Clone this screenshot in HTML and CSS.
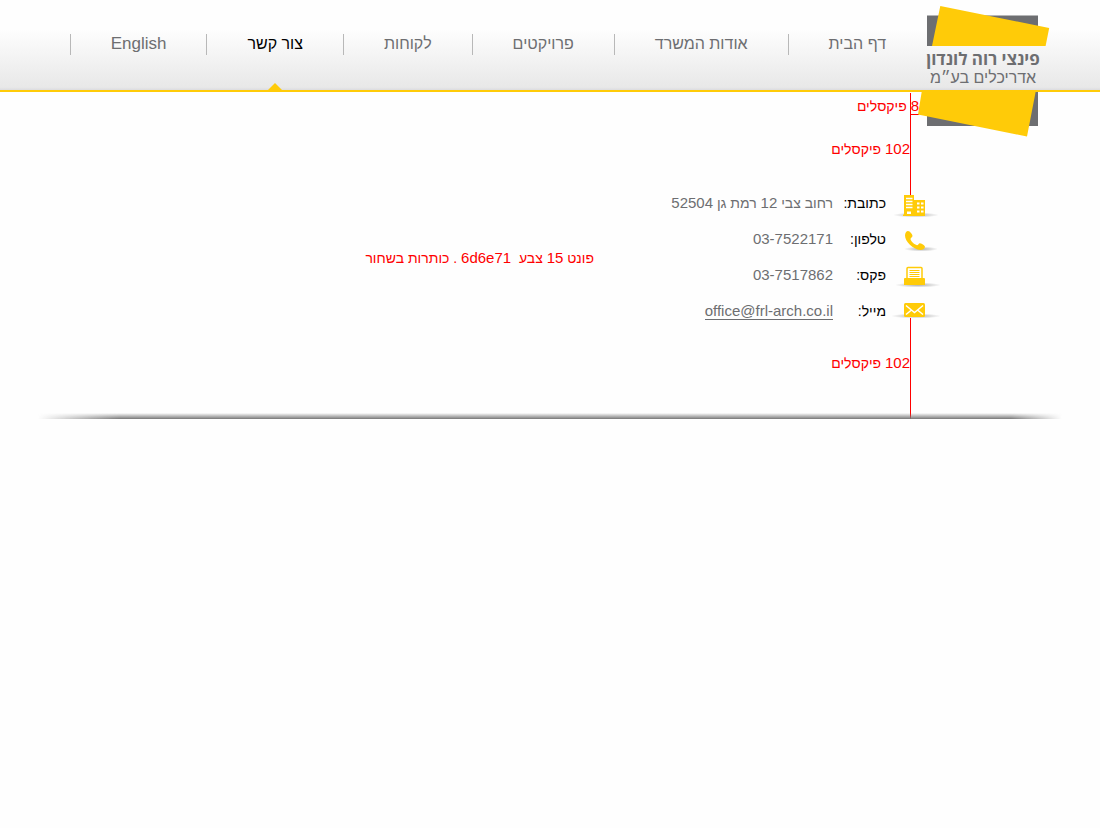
FILE: index.html
```
<!DOCTYPE html>
<html lang="he" dir="rtl">
<head>
<meta charset="utf-8">
<title>צור קשר</title>
<link rel="stylesheet" href="styles.css">
</head>
<body>
<header class="header">
  <a class="logo" href="#" aria-label="פינצי רוה לונדון אדריכלים">
    <svg width="133" height="133" viewBox="0 0 133 133">
      <path class="logo-dark" d="M10 10.500H121V41H10zM10 87H121V121H10z"/>
      <path class="logo-bright" d="M23.300 1L132.200 23L128.600 41H15zM5 85H119L110 131.500L1 109.500z"/>
      <text class="logo-name" x="66" y="60" text-anchor="middle">פינצי רוה לונדון</text>
      <text class="logo-sub" x="66" y="78" text-anchor="middle">אדריכלים בע״מ</text>
    </svg>
  </a>
  <nav>
    <ul class="menu">
      <li class="menu-item"><a href="#">דף הבית</a></li>
      <li class="menu-item"><a href="#">אודות המשרד</a></li>
      <li class="menu-item"><a href="#">פרויקטים</a></li>
      <li class="menu-item"><a href="#">לקוחות</a></li>
      <li class="menu-item menu-item-active"><a href="#" aria-current="page">צור קשר</a></li>
      <li class="menu-item"><a class="latin-link" href="#" lang="en">English</a></li>
    </ul>
  </nav>
</header>
<main>
  <div class="guide guide-top">
    <p class="guide-offset"><span class="num guide-tick">8</span> פיקסלים</p>
    <p><span class="num">102</span> פיקסלים</p>
  </div>
  <div class="contact">
    <ul class="contact-list">
      <li class="contact-row">
        <svg class="icon" width="46" height="16" viewBox="0 0 46 16">
          <defs>
            <radialGradient id="shade"><stop offset="0" stop-color="#777" stop-opacity=".6"/><stop offset="1" stop-color="#777" stop-opacity="0"/></radialGradient>
          </defs>
          <ellipse cx="23" cy="20" rx="23" ry="2.500" fill="url(#shade)"/>
          <path class="icon-fill" d="M11 0H21V5H32V21H10V19.500H11z"/>
          <path class="icon-line" d="M13 3.500H19.500M13 6.500H19.500M13 9.500H19.500M13 12.500H19.500"/>
          <path fill="#fff" d="M14 16.500H18V19H14zM24 7.500h2.500v2h-2.500zM28 7.500h2.500v2h-2.500zM24 11.500h2.500v2h-2.500zM28 11.500h2.500v2h-2.500zM24 15.500h2.500v2h-2.500zM28 15.500h2.500v2h-2.500z"/>
        </svg>
        <span class="label">כתובת:</span>
        <span class="value">רחוב צבי <span class="num">12</span> רמת גן <span class="num">52504</span></span>
      </li>
      <li class="contact-row">
        <svg class="icon" width="46" height="16" viewBox="0 0 46 16">
          <ellipse cx="28" cy="18" rx="17" ry="2.500" fill="url(#shade)"/>
          <path class="icon-fill" d="M15 0C17 0 19.500 3.500 19.500 5C19.500 6.200 17.500 6.800 17.500 8C18 10.500 21.500 13.600 24 14.200C25.500 14.200 25.600 12 27 12.200C29 12.500 32.200 14.700 32 16C31.600 17.800 29.500 19 27.500 19C20 18.500 12 10.500 12 4.500C12 2 13.500 0 15 0z"/>
        </svg>
        <span class="label">טלפון:</span>
        <span class="value num" dir="ltr">03-7522171</span>
      </li>
      <li class="contact-row">
        <svg class="icon" width="46" height="16" viewBox="0 0 46 16">
          <ellipse cx="25" cy="18" rx="23" ry="2.500" fill="url(#shade)"/>
          <path fill="#fff" stroke="#ffcb08" stroke-width="1.500" d="M14 12V1.500Q14 .5 15 .5H28Q29 .5 29 1.500V12"/>
          <path class="icon-fill" d="M11 12Q11 11 12 11H31Q32 11 32 12V18H11z"/>
          <path stroke="#ffcb08" d="M16.500 3.500H26.500M16.500 5.500H26.500M16.500 7.500H26.500M16.500 9.500H26.500"/>
        </svg>
        <span class="label">פקס:</span>
        <span class="value num" dir="ltr">03-7517862</span>
      </li>
      <li class="contact-row">
        <svg class="icon" width="46" height="16" viewBox="0 0 46 16">
          <ellipse cx="23" cy="13" rx="25" ry="2.500" fill="url(#shade)"/>
          <rect class="icon-fill" x="11" y="0" width="21" height="14" rx="1.500"/>
          <path class="icon-line" d="M13 2.500L19 7.500L21.500 9.500L24 7.500L30 2.500M13 11.500L18.500 7M30 11.500L24.500 7"/>
        </svg>
        <span class="label">מייל:</span>
        <a class="value num mail" href="mailto:office@frl-arch.co.il" dir="ltr">office@frl-arch.co.il</a>
      </li>
    </ul>
    <p class="note">פונט <span class="num">15</span> צבע &nbsp;<span class="num">6d6e71</span> . כותרות בשחור</p>
  </div>
  <div class="guide guide-bottom">
    <p><span class="num">102</span> פיקסלים</p>
  </div>
  <hr class="divider">
</main>
</body>
</html>
```
FILE: styles.css
```
* {
  box-sizing: border-box;
}

body {
  margin: 0;
  background: #fefefe;
  color: #6d6e71;
  font-family: "Liberation Sans", Arial, sans-serif;
  font-size: 14px;
  line-height: 16px;
}

ul,
p {
  margin: 0;
  padding: 0;
  list-style: none;
}

.num {
  font-size: 15px;
}

.header {
  position: relative;
  padding: 34px 214px 35px 0;
  border-bottom: 2px solid #ffcb08;
  background: linear-gradient(#fefefe 32%, #e8e8e8 97%, #dcdce0);
}

.logo {
  position: absolute;
  top: 5px;
  right: 50px;
}

.logo svg {
  display: block;
}

.logo-dark {
  fill: #6d6e71;
}

.logo-bright {
  fill: #ffcb08;
}

.logo-name,
.logo-sub {
  fill: #6d6e71;
}

.logo-name {
  font-family: "Open Sans", "Liberation Sans", sans-serif;
  font-size: 17px;
  font-weight: 700;
}

.logo-sub {
  font-family: "Liberation Sans", Arial, sans-serif;
  font-size: 16px;
}

.menu {
  display: flex;
}

.menu-item {
  position: relative;
  height: 21px;
  padding: 0 40px;
  border-left: 1px solid #b8b8b8;
  font-size: 16px;
  line-height: 20px;
  white-space: nowrap;
}

.menu-item:first-child {
  padding-right: 0;
}

.menu-item a {
  color: inherit;
  text-decoration: none;
}

.menu-item .latin-link {
  font-size: 17px;
}

.menu-item-active {
  color: #000;
}

.menu-item-active::after {
  content: "";
  position: absolute;
  top: 49px;
  left: calc(50% - 7px);
  border: 7px solid transparent;
  border-top: 0;
  border-bottom-color: #ffcb08;
}

.guide {
  margin-right: 189px;
  border-right: 1px solid #f00;
  color: #f00;
}

.guide-top {
  height: 102px;
  margin-top: 1px;
  padding-top: 5px;
}

.guide-offset {
  margin: 0 -9px 26px 0;
}

.guide-tick {
  display: inline-block;
  border-bottom: 1px solid #f00;
}

.guide-bottom {
  height: 102px;
  margin-top: -2px;
  padding-top: 37px;
}

.contact {
  display: flex;
  align-items: center;
  padding-right: 161px;
}

.contact-list {
  display: flex;
  flex-direction: column;
  gap: 20px;
  width: 345px;
}

.contact-row {
  display: flex;
}

.icon {
  overflow: visible;
  margin-left: 7px;
}

.icon-fill {
  fill: #ffcb08;
}

.icon-line {
  fill: none;
  stroke: #fff;
  stroke-width: 1.500;
}

.label {
  width: 53px;
  color: #000;
}

.value {
  color: #6d6e71;
}

.mail {
  border-bottom: 1px solid #6d6e71;
  text-decoration: none;
}

.note {
  color: #f00;
}

.divider {
  height: 6px;
  margin: -7px 38px 0;
  border: 0;
  background: linear-gradient(transparent, #777);
  mask-image: linear-gradient(to right, transparent, #000 8%, #000 95%, transparent);
}
```
